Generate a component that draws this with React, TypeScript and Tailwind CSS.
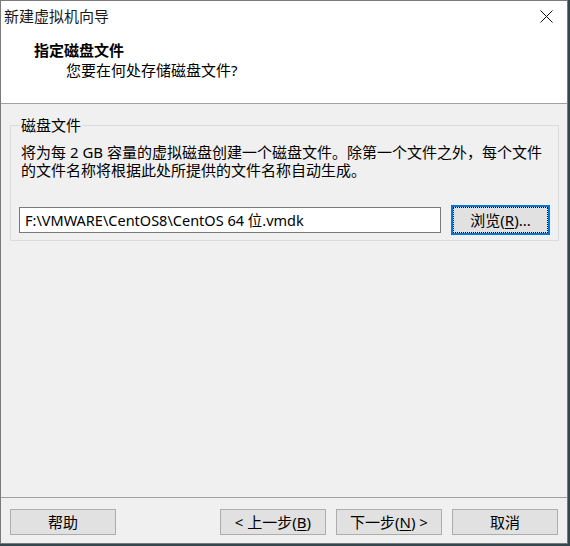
import React from 'react';

const font = "font-['Noto_Sans','Noto_Sans_CJK_SC',sans-serif]";

const DialogButton = ({ children, className = '' }: { children: React.ReactNode; className?: string }) => (
  <button
    className={`h-[26px] w-[106px] border border-[#adadad] bg-[#e1e1e1] text-[15px] leading-none text-black ${className}`}
  >
    {children}
  </button>
);

const App = () => {
  return (
    <div className={`w-[570px] h-[546px] bg-[#34464e] ${font}`}>
      <div className="w-[568px] h-[544px] border border-[#7a7a7a] bg-[#f0f0f0] flex flex-col text-black">
        {/* header */}
        <div className="h-[103px] bg-white border-b border-[#a0a0a0] flex flex-col">
          <div className="h-[30px] flex items-center justify-between pl-[3px] pr-[14px]">
            <span className="text-[15px] leading-none text-[#1a1a1a]">新建虚拟机向导</span>
            <svg width="13" height="13" viewBox="0 0 13 13" className="block">
              <path d="M0.5 0.5 L12.5 12.5 M12.5 0.5 L0.5 12.5" stroke="#111" strokeWidth="1" fill="none" />
            </svg>
          </div>
          <div className="mt-[9px] pl-[33px] text-[15px] leading-[20px] font-bold">指定磁盘文件</div>
          <div className="pl-[65px] text-[15px] leading-[20px]">您要在何处存储磁盘文件?</div>
        </div>

        {/* body */}
        <div className="flex-1 pt-[13px] pl-[9px]">
          <fieldset className="w-[548px] border border-[#dcdcdc] pl-[8px] pr-[8px] pb-[5px]">
            <legend className="ml-[1px] px-[1px] text-[15px] leading-[16px]">磁盘文件</legend>
            <div className="mt-[10px] pl-[2px] text-[15px] whitespace-nowrap flex flex-col">
              <span className="h-[18px] flex items-center">将为每 2 GB 容量的虚拟磁盘创建一个磁盘文件。除第一个文件之外，每个文件</span>
              <span className="h-[18px] flex items-center">的文件名称将根据此处所提供的文件名称自动生成。</span>
            </div>
            <div className="mt-[26px] flex items-center gap-[10px]">
              <div className="w-[422px] h-[26px] border border-[#7a7a7a] bg-white flex items-center pl-[5px] text-[14.5px] leading-none">
                F:\VMWARE\CentOS8\CentOS 64 位.vmdk
              </div>
              <button className="w-[99px] h-[30px] border-2 border-[#0078d7] bg-[#e1e1e1] p-0">
                <div className="h-full w-full border border-dotted border-black flex items-center justify-center text-[15px] leading-none">
                  浏览(<span className="underline underline-offset-2">R</span>)...
                </div>
              </button>
            </div>
          </fieldset>
        </div>

        {/* footer */}
        <div className="h-[46px] border-t border-[#a0a0a0] flex items-start justify-between pt-[11px] pl-[9px] pr-[9px]">
          <DialogButton>帮助</DialogButton>
          <div className="flex gap-[10px]">
            <DialogButton>
              &lt; 上一步(<span className="underline underline-offset-2">B</span>)
            </DialogButton>
            <DialogButton>
              下一步(<span className="underline underline-offset-2">N</span>) &gt;
            </DialogButton>
            <DialogButton>取消</DialogButton>
          </div>
        </div>
      </div>
    </div>
  );
};

export default App;
